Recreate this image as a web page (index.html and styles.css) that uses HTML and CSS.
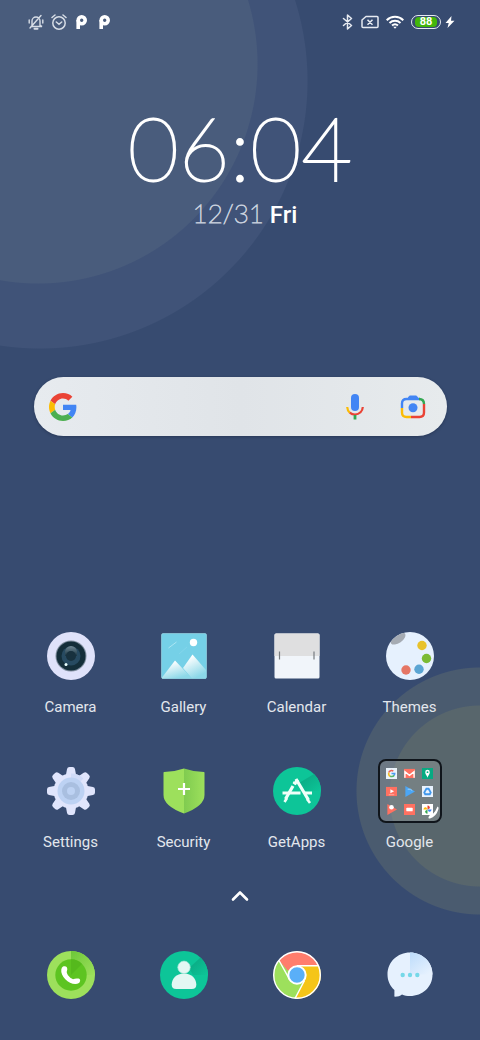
FILE: index.html
```
<!DOCTYPE html>
<html lang="en">
<head>
  <meta charset="utf-8">
  <meta name="viewport" content="width=device-width, initial-scale=1">
  <title>Home</title>
  <link rel="stylesheet" href="styles.css">
</head>
<body>
  <header class="status-bar">
    <div class="status-group">
      <svg width="16" height="16" viewBox="0 0 16 16" fill="none" stroke="#d7dde6" stroke-width="1.400" stroke-linecap="round">
        <path d="M4 11.500V7a4 4 0 0 1 8 0v4.500l2 1H3M1.200 6v3M14.800 6v3M2 14L13 1.500"/>
        <path d="M6.500 14.700h3" stroke-width="2"/>
      </svg>
      <svg width="16" height="16" viewBox="0 0 16 16" fill="none" stroke="#d7dde6" stroke-width="1.500" stroke-linecap="round">
        <circle cx="8" cy="9" r="6.200"/>
        <path d="M1 3.500L4 1M15 3.500L12 1M5.300 8L8 10.300 10.700 8"/>
      </svg>
      <svg width="16" height="16" viewBox="0 0 16 16" fill="none" stroke="#fff" stroke-width="3.600">
        <circle cx="7.700" cy="6.300" r="3.500"/>
        <path d="M4.200 6v9"/>
      </svg>
      <svg width="16" height="16" viewBox="0 0 16 16" fill="none" stroke="#fff" stroke-width="3.600">
        <circle cx="7.700" cy="6.300" r="3.500"/>
        <path d="M4.200 6v9"/>
      </svg>
    </div>
    <div class="status-group">
      <svg width="12" height="16" viewBox="0 0 12 16" fill="none" stroke="#e6eaf1" stroke-width="1.500" stroke-linejoin="round" stroke-linecap="round">
        <path d="M1.500 4.500l8 7L5.500 15V1l4 3.500-8 7"/>
      </svg>
      <svg width="18" height="14" viewBox="0 0 18 14" fill="none" stroke="#e6eaf1" stroke-width="1.500" stroke-linejoin="round">
        <path d="M5 1.500h11a1 1 0 0 1 1 1v9a1 1 0 0 1-1 1H2a1 1 0 0 1-1-1V5zM6.500 4.700l5 5M11.500 4.700l-5 5"/>
      </svg>
      <svg width="18" height="14" viewBox="0 0 18 14" fill="none" stroke="#fff" stroke-width="2">
        <path d="M.7 5.200a12 12 0 0 1 16.600 0M3.500 8a8 8 0 0 1 11 0M6 10.600a4.500 4.500 0 0 1 6 0"/>
        <path d="M7.200 11.800L9 13.800l1.800-2z" fill="#fff" stroke="none"/>
      </svg>
      <span class="power">
        <span class="battery"><span class="battery-level">88</span></span>
        <svg width="10" height="14" viewBox="0 0 10 14" fill="#fff"><path d="M6.500 1L.5 8h3.200L2.500 13l7-7.200H6z"/></svg>
      </span>
    </div>
  </header>

  <main class="home">
    <section class="clock">
      <time class="time">06:04</time>
      <div class="date"><span class="day">12/31</span><span class="weekday">Fri</span></div>
    </section>

    <form class="search" role="search">
      <label class="search-logo" for="q" aria-label="Google search">
        <svg width="28" height="28" viewBox="0 0 48 48">
          <path fill="#ea4335" d="M24 9.500c3.540 0 6.710 1.220 9.210 3.600l6.850-6.850C35.900 2.380 30.470 0 24 0 14.620 0 6.510 5.380 2.560 13.220l7.980 6.190C12.430 13.720 17.740 9.500 24 9.500z"/>
          <path fill="#4285f4" d="M46.980 24.550c0-1.570-.15-3.090-.38-4.550H24v9.020h12.940c-.58 2.960-2.260 5.480-4.780 7.180l7.730 6c4.510-4.180 7.090-10.360 7.090-17.650z"/>
          <path fill="#fbbc05" d="M10.530 28.590c-.48-1.450-.76-2.990-.76-4.590s.27-3.140.76-4.590l-7.980-6.190C.92 16.460 0 20.120 0 24s.92 7.540 2.560 10.780z"/>
          <path fill="#4caf50" d="M24 48c6.480 0 11.930-2.130 15.890-5.810l-7.730-6c-2.150 1.450-4.920 2.300-8.160 2.300-6.260 0-11.570-4.220-13.470-9.910l-7.980 6.190C6.510 42.620 14.620 48 24 48z"/>
        </svg>
      </label>
      <input class="search-input" id="q" type="text" name="q">
      <button class="search-button" type="button" aria-label="Voice search">
        <svg width="18" height="26" viewBox="0 0 18 26" fill="none" stroke-width="2.200">
          <rect x="5" y="0" width="8" height="17" rx="4" fill="#4285f4"/>
          <path d="M1.200 13q.2 3.500 2.600 5.800" stroke="#fbbc05"/>
          <path d="M3.800 18.600q2.200 1.900 5.200 1.900c4.500 0 7.600-3.300 7.800-7.500" stroke="#ea4335"/>
          <path d="M9 21v4.500" stroke="#34a853" stroke-width="2.800"/>
        </svg>
      </button>
      <button class="search-button" type="button" aria-label="Google Lens">
        <svg width="26" height="24" viewBox="0 0 26 24" fill="none" stroke-width="2.400">
          <path d="M2 13V8.500Q2 4 6.500 4H20" stroke="#4285f4"/>
          <path d="M8 3.500L9.500 1h7L18 3.500z" fill="#4285f4" stroke="#4285f4" stroke-width="1"/>
          <path d="M19 4q5 0 5 5" stroke="#34a853"/>
          <path d="M24 9v8.500Q24 22 19.500 22H11" stroke="#ea4335"/>
          <path d="M11 22H6.500Q2 22 2 17.500V13" stroke="#fbbc05"/>
          <circle cx="13" cy="12.800" r="4.500" fill="#4285f4"/>
        </svg>
      </button>
    </form>

    <nav class="apps">
      <a class="app" href="#camera">
        <span class="app-icon">
          <svg width="48" height="48" viewBox="0 0 48 48">
            <defs>
              <linearGradient id="lens" x2="0" y2="1"><stop offset="0" stop-color="#718995"/><stop offset="1" stop-color="#193442"/></linearGradient>
            </defs>
            <circle cx="24" cy="24" r="24" fill="#dfe2fa"/>
            <circle cx="24" cy="24" r="15.500" fill="#7e8d9d"/>
            <circle cx="24" cy="24" r="14.500" fill="#142e3a"/>
            <circle cx="24" cy="24" r="9.500" fill="#274a61"/>
            <path d="M18 20a6 6 0 0 1 12 0v4H18z" fill="url(#lens)"/>
            <circle cx="24" cy="24" r="5" fill="#18313e"/>
            <circle cx="19" cy="32.500" r="1.500" fill="#e9ffff"/>
          </svg>
        </span>
        <span class="app-name">Camera</span>
      </a>
      <a class="app" href="#gallery">
        <span class="app-icon">
          <svg width="48" height="48" viewBox="0 0 48 48">
            <defs>
              <linearGradient id="snow" x2=".5" y2="1"><stop offset=".2" stop-color="#fff"/><stop offset="1" stop-color="#8cd8e8"/></linearGradient>
            </defs>
            <rect x="1.500" y="1.500" width="45" height="45" rx="1.500" fill="#75d0e7" stroke="#a2dfed" stroke-width=".6"/>
            <path d="M2 45.500l13-17 17 18H2z" fill="url(#snow)"/>
            <path d="M23 36l9.500-13.500L46 38v8.500H32z" fill="url(#snow)"/>
            <circle cx="33.500" cy="10.500" r="3.700" fill="#fff"/>
            <path d="M8.500 16l8-6" stroke="#b8eaf5" stroke-width=".8"/>
            <path d="M19 22l8-7" stroke="#8cd9ec" stroke-width=".6"/>
          </svg>
        </span>
        <span class="app-name">Gallery</span>
      </a>
      <a class="app" href="#calendar">
        <span class="app-icon">
          <svg width="48" height="48" viewBox="0 0 48 48">
            <rect x="1.500" y="1.500" width="45" height="45" rx="1.500" fill="#f1f5fa"/>
            <path d="M1.500 24V3Q1.500 1.500 3 1.500h42q1.500 0 1.500 1.500v21z" fill="#dfdfe0"/>
            <path d="M6.500 19.500v8M41 19.500v8" stroke="#777c80" stroke-width="1.200"/>
          </svg>
        </span>
        <span class="app-name">Calendar</span>
      </a>
      <a class="app" href="#themes">
        <span class="app-icon">
          <svg width="48" height="48" viewBox="0 0 48 48">
            <defs><clipPath id="palette"><circle cx="24" cy="24" r="24"/></clipPath></defs>
            <circle cx="24" cy="24" r="24" fill="#e6f1fe"/>
            <g clip-path="url(#palette)">
              <ellipse cx="12" cy="6.500" rx="8.500" ry="4.500" transform="rotate(-35 12 6.500)" fill="#a5abb3"/>
            </g>
            <circle cx="36" cy="13.500" r="4.700" fill="#e8c22b"/>
            <circle cx="40.500" cy="26.500" r="4.700" fill="#7bbb34"/>
            <circle cx="33" cy="37.300" r="4.700" fill="#5ba5d3"/>
            <circle cx="20" cy="38" r="4.700" fill="#e57665"/>
          </svg>
        </span>
        <span class="app-name">Themes</span>
      </a>
      <a class="app" href="#settings">
        <span class="app-icon">
          <svg width="48" height="48" viewBox="0 0 48 48">
            <g stroke="#e0e5fc" stroke-width="5" stroke-linejoin="round" fill="#e0e5fc">
              <path d="M22.500 2.500h3l1.500 8h-6zM22.500 45.500h3l1.500-8h-6zM2.500 22.500v3l8 1.500v-6zM45.500 22.500v3l-8 1.500v-6z"/>
              <path d="M22.500 2.500h3l1.500 8h-6zM22.500 45.500h3l1.500-8h-6zM2.500 22.500v3l8 1.500v-6zM45.500 22.500v3l-8 1.500v-6z" transform="rotate(45 24 24)"/>
            </g>
            <circle cx="24" cy="24" r="17.500" fill="#e0e5fc"/>
            <path d="M24 6.500a17.500 17.500 0 0 1 12.400 5L24 24z" fill="#d0dbf8"/>
            <circle cx="24" cy="24" r="13.500" fill="#bdd2f3"/>
            <circle cx="24" cy="24" r="9" fill="#a9bfe0"/>
            <circle cx="24" cy="24" r="4" fill="#bdd2f3"/>
          </svg>
        </span>
        <span class="app-name">Settings</span>
      </a>
      <a class="app" href="#security">
        <span class="app-icon">
          <svg width="48" height="48" viewBox="0 0 48 48">
            <defs><linearGradient id="shield"><stop offset="0" stop-color="#80cb50"/><stop offset="1" stop-color="#9de05c"/></linearGradient></defs>
            <path d="M24 1.500Q14 5 4 5q-.5 0-.5 1v22q0 11 20.500 18.500z" fill="#9de05c"/>
            <path d="M24 1.500Q34 5 44 5q.5 0 .5 1v22q0 11-20.500 18.500z" fill="url(#shield)"/>
            <path d="M24 16v12M18 22h12" stroke="#fff" stroke-width="2.200"/>
          </svg>
        </span>
        <span class="app-name">Security</span>
      </a>
      <a class="app" href="#getapps">
        <span class="app-icon">
          <svg width="48" height="48" viewBox="0 0 48 48">
            <defs><linearGradient id="fold" x1="0" y1="0" x2="1" y2="1"><stop offset="0" stop-color="#0aa580"/><stop offset="1" stop-color="#0dc598"/></linearGradient></defs>
            <circle cx="24" cy="24" r="24" fill="#0dc598"/>
            <path d="M26 16L41 7a24 24 0 0 1 7 17H30z" fill="url(#fold)"/>
            <g stroke="#effff9" stroke-width="3.200">
              <path d="M9.500 26h18M31 26h8"/>
              <path d="M23 12l12.500 21M22 15l-1 2M20 19L12.500 32"/>
              <path d="M34 32l3 4M14 31l-2.500 4" stroke-width="2.600"/>
              <path d="M24.500 12.500L21.500 17.500"/>
            </g>
          </svg>
        </span>
        <span class="app-name">GetApps</span>
      </a>
      <a class="app" href="#google">
        <span class="app-icon folder">
          <svg class="mini" viewBox="0 0 12 12"><path fill="#eaf3fb" d="M0 0h12v12H0z"/><g fill="none" stroke-width="1.700"><path d="M3 5a3.200 3.200 0 0 1 5-1.500" stroke="#ea6558"/><path d="M3 5q-.5 3 1.500 4" stroke="#f4bc25"/><path d="M4.500 9q3 1 4.500-1" stroke="#56b769"/><path d="M6 6h3.500q0 1-.8 2" stroke="#4b9cf0"/></g></svg>
          <svg class="mini" viewBox="0 0 12 12"><path fill="#ff7161" d="M0 1h12v10H0z"/><path d="M1 10.500V4l5 4 5-4v6.500" fill="none" stroke="#fff" stroke-width="1.500"/></svg>
          <svg class="mini" viewBox="0 0 12 12"><path fill="#07aa82" d="M0 0h12v12H0z"/><path fill="#fff" d="M6 10.500C5.500 8 3.500 7 3.500 4.500a2.500 2.500 0 0 1 5 0C8.500 7 6.500 8 6 10.500z"/><circle cx="6" cy="4.500" r="1" fill="#07aa82"/></svg>
          <svg class="mini" viewBox="0 0 12 12"><path fill="#ff7161" d="M0 1h12v10H0z"/><path fill="#fff" d="M4.800 3.500l4 2.200-4 2.200z"/><path stroke="#ffafa5" d="M3 9.500h6"/></svg>
          <svg class="mini" viewBox="0 0 12 12"><path fill="#4ba6f5" d="M1.500 0L12 6 1.500 12z"/><path d="M4 3.500h3l2 1.500" stroke="#a5daff" fill="none"/></svg>
          <svg class="mini" viewBox="0 0 12 12"><path fill="#e9f3fe" d="M0 0h12v12H0z"/><path d="M4.800 3h2.400L9.500 7 8.500 9h-5l-1-2z" fill="none" stroke="#4098ec" stroke-width="2"/></svg>
          <svg class="mini" viewBox="0 0 12 12"><path fill="#ff7161" d="M1.500 0L12 6 1.500 12z"/><circle cx="6" cy="3.500" r="2.500" fill="#fff"/></svg>
          <svg class="mini" viewBox="0 0 12 12"><path fill="#ff7161" d="M0 0h12v12H0z"/><rect x="2.500" y="4" width="7" height="4" rx="1" fill="#fff"/></svg>
          <svg class="mini" viewBox="0 0 12 12"><path fill="#fff" d="M0 0h12v12H0z"/><path d="M6 6V1.500Q9 2 8.500 4.500z" fill="#ea4335"/><path d="M6 6h4.500Q10 9 7.500 8.500z" fill="#4285f4"/><path d="M6 6v4.500Q3 10 3.500 7.500z" fill="#34a853"/><path d="M6 6H1.500Q2 3 4.500 3.500z" fill="#fbbc05"/></svg>
          <svg class="folder-badge" width="12" height="14" viewBox="0 0 12 14"><path d="M10.500.5Q12 1 11.500 3 9 11 3 12.500 1 13 1.500 11l2-3 1.500 1Q9 5 10.500.5z" fill="#fff"/></svg>
        </span>
        <span class="app-name">Google</span>
      </a>
    </nav>

    <button class="drawer" type="button" aria-label="Open app drawer">
      <svg width="18" height="12" viewBox="0 0 18 12" fill="none" stroke="#fff" stroke-width="2.600" stroke-linecap="round" stroke-linejoin="round"><path d="M2 9.500l7-7 7 7"/></svg>
    </button>
  </main>

  <footer class="dock">
    <a class="dock-app" href="#phone" aria-label="Phone">
      <svg width="48" height="48" viewBox="0 0 48 48">
        <defs><linearGradient id="shade" x2="1" y2="1"><stop offset="0" stop-color="#6cc738"/><stop offset="1" stop-color="#9de05c"/></linearGradient></defs>
        <circle cx="24" cy="24" r="24" fill="#9de05c"/>
        <path d="M24 0a24 24 0 0 1 24 24H24z" fill="url(#shade)"/>
        <circle cx="24" cy="24" r="15.700" fill="#5dc421"/>
        <path d="M24 8.300A15.700 15.700 0 0 1 35 13L24 24z" fill="#55b91d"/>
        <path d="M16 15.500c2.500-1 4.500 0 4.300 3l-.6 2.500c.3 2.800 3 5.800 6.300 7.200 2-.8 3.500-1 5.500-.6 2.300.7 2 3 .5 4.500C25 36 13 26.500 14.300 18.500q.2-2 1.700-3z" fill="#fff"/>
      </svg>
    </a>
    <a class="dock-app" href="#contacts" aria-label="Contacts">
      <svg width="48" height="48" viewBox="0 0 48 48">
        <circle cx="24" cy="24" r="24" fill="#0dc598"/>
        <path d="M29 17L40.500 6.500A24 24 0 0 1 48 24H33z" fill="url(#fold)"/>
        <path d="M24 22.500c8 0 12 5 12.300 11 .1 3-1.500 4.500-4.500 4.500H16.200c-3 0-4.600-1.500-4.500-4.500.3-6 4.300-11 12.300-11z" fill="#e3f7f3"/>
        <circle cx="24" cy="16.300" r="6.200" fill="#e3f7f3" stroke="#a5e7d9" stroke-width=".7"/>
      </svg>
    </a>
    <a class="dock-app" href="#chrome" aria-label="Chrome">
      <svg width="48" height="48" viewBox="0 0 48 48">
        <circle cx="24" cy="24" r="23.500" fill="#9de05c"/>
        <path d="M6 9.500A23.500 23.500 0 0 1 46 14.800H24l-9.300 4.700z" fill="#ff7d6d"/>
        <path d="M24 14.800h22A23.500 23.500 0 0 1 22 47.500l9.500-18z" fill="#f5c518"/>
        <path d="M24 14.800h22M6 9.500l9.500 17M22 47.500l9.500-18" stroke="#fff" stroke-width="1.500"/>
        <circle cx="24" cy="24" r="23.300" fill="none" stroke="#fff" stroke-width="1.400"/>
        <circle cx="24" cy="24" r="8.700" fill="#5aaff8" stroke="#fff" stroke-width="2"/>
      </svg>
    </a>
    <a class="dock-app" href="#messages" aria-label="Messages">
      <svg width="48" height="48" viewBox="0 0 48 48">
        <defs><linearGradient id="bubble" x1="0" y1="0" x2=".8" y2="1"><stop offset="0" stop-color="#bddcfb"/><stop offset="1" stop-color="#e6f1fe"/></linearGradient></defs>
        <path d="M24 1.500c12.500 0 22.500 9.500 22.500 22S36.500 45 24 45c-3 0-5.500-.6-8-1.600-2 1.300-4 2.300-7 2.300-.8 0-.7-.8-.6-1.700V39C4 35 1.500 29.500 1.500 23.500 1.500 11 11.500 1.500 24 1.500z" fill="#e6f1fe"/>
        <path d="M24 1.500c12.500 0 22.500 9.500 22.500 22H24z" fill="url(#bubble)"/>
        <g fill="#75d8e8"><circle cx="16.700" cy="24" r="2.200"/><circle cx="24" cy="24" r="2.200"/><circle cx="31.300" cy="24" r="2.200"/></g>
      </svg>
    </a>
  </footer>
</body>
</html>
```
FILE: styles.css
```
* {
  box-sizing: border-box;
}

body {
  margin: 0;
  min-height: 100vh;
  display: flex;
  flex-direction: column;
  color: #fff;
  font-family: Roboto, "Liberation Sans", sans-serif;
  background-color: #374b70;
  background-image:
    radial-gradient(circle at 38px 64px, #495c7c 219px, transparent 220px),
    radial-gradient(circle at 40px 81px, #405378 267px, transparent 268px),
    radial-gradient(circle at 100% 796px, #58666c 90px, transparent 91px),
    radial-gradient(circle at 100% 791px, #4a5b6f 123px, transparent 124px);
}

svg {
  display: block;
  flex-shrink: 0;
}

a {
  color: inherit;
  text-decoration: none;
}

button {
  padding: 0;
  border: 0;
  background: none;
  cursor: pointer;
}

/* Status bar */
.status-bar {
  display: flex;
  justify-content: space-between;
  align-items: center;
  height: 44px;
  padding: 0 25px 0 28px;
}

.status-group {
  display: flex;
  align-items: center;
  gap: 7px;
}

.power {
  display: flex;
  align-items: center;
  gap: 4px;
}

.battery {
  width: 30px;
  height: 14px;
  padding: 1px 3px;
  border: 1px solid #e6eaf1;
  border-radius: 7px;
}

.battery-level {
  display: block;
  height: 10px;
  border-radius: 4px;
  background: #43b60b;
  font-size: 11px;
  font-weight: 700;
  line-height: 10px;
  text-align: center;
}

/* Clock widget */
.home {
  display: flex;
  flex-direction: column;
  flex: 1;
}

.clock {
  display: flex;
  flex-direction: column;
  align-items: center;
  padding-top: 63px;
}

.time {
  font-family: Lato, sans-serif;
  font-size: 88px;
  font-weight: 200;
  line-height: 80px;
  -webkit-text-stroke: 2px #fff;
}

.date {
  display: flex;
  align-items: baseline;
  gap: 6px;
  margin-top: 12px;
  padding-left: 10px;
  line-height: 28px;
}

.day {
  font-family: Lato, sans-serif;
  font-size: 26px;
  font-weight: 200;
  -webkit-text-stroke: 1px #c9d1de;
}

.weekday {
  font-size: 24px;
  font-weight: 500;
}

/* Search */
.search {
  display: flex;
  align-items: center;
  gap: 30px;
  height: 59px;
  margin: 148px 33px 0 34px;
  padding: 0 20px 0 15px;
  border-radius: 30px;
  background: linear-gradient(90deg, #e7ebef, #e0e4e8 50%, #e7ebed);
  box-shadow: 0 1px 3px rgba(20, 30, 50, 0.4);
}

.search-input {
  flex: 1;
  min-width: 0;
  height: 40px;
  border: 0;
  outline: 0;
  background: transparent;
  color: #333;
  font-size: 18px;
}

.search-button {
  display: flex;
  justify-content: center;
  width: 28px;
}

/* App grid */
.apps {
  display: grid;
  grid-template-columns: repeat(4, 1fr);
  row-gap: 42px;
  margin-top: 188px;
  padding: 0 14px;
}

.app {
  display: flex;
  flex-direction: column;
  align-items: center;
  gap: 9px;
}

.app-icon {
  display: flex;
  align-items: center;
  justify-content: center;
  width: 64px;
  height: 64px;
}

.app-name {
  color: #e3e7ed;
  font-size: 15px;
  line-height: 20px;
}

.folder {
  position: relative;
  display: grid;
  grid-template-columns: repeat(3, 11px);
  gap: 7px;
  align-content: center;
  border: 2px solid #10151b;
  border-radius: 8px;
  background: rgba(160, 165, 165, 0.4);
}

.mini {
  width: 11px;
  height: 11px;
}

.folder-badge {
  position: absolute;
  right: 1px;
  bottom: 1px;
}

.drawer {
  align-self: center;
  margin-top: 38px;
}

/* Dock */
.dock {
  display: grid;
  grid-template-columns: repeat(4, 1fr);
  padding: 0 14px 41px;
}

.dock-app {
  display: flex;
  justify-content: center;
}
```
